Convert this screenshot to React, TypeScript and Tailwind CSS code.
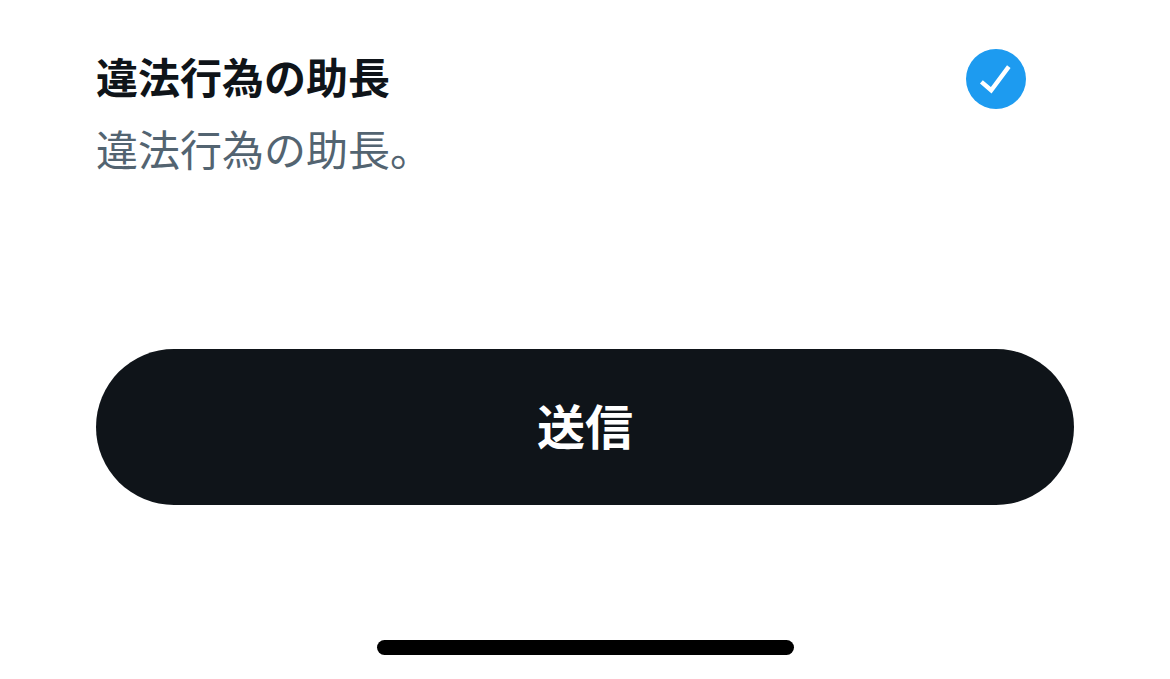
export default function App() {
  return (
    <main className="flex min-h-screen flex-col bg-white font-['Noto_Sans_CJK_JP',sans-serif]">
      <form className="flex flex-col px-24 pt-10" onSubmit={(e) => e.preventDefault()}>
        <label htmlFor="illegal" className="flex items-start justify-between pr-12">
          <span className="flex flex-col text-[42px] leading-[72px]">
            <span className="font-bold text-[#0f1419]">違法行為の助長</span>
            <span id="illegal-note" className="text-[#536471]">違法行為の助長。</span>
          </span>
          <span className="mt-[9px] grid size-[60px] shrink-0">
            <input
              id="illegal"
              type="checkbox"
              defaultChecked
              aria-describedby="illegal-note"
              className="peer col-start-1 row-start-1 size-[60px] appearance-none rounded-full border-2 border-[#cfd9de] checked:border-0 checked:bg-[#1d9bf0]"
            />
            <svg
              viewBox="0 0 60 60"
              aria-hidden="true"
              className="pointer-events-none col-start-1 row-start-1 hidden size-[60px] peer-checked:block"
            >
              <path d="M15.4 32.8 L25.2 41.2 L42.8 17.6" fill="none" stroke="#fff" strokeWidth="4.4" />
            </svg>
          </span>
        </label>
        <button
          type="submit"
          className="mt-[165px] h-[156px] w-full rounded-full bg-[#0f1419] pb-1.5 text-[48px] leading-[72px] font-bold text-white"
        >
          送信
        </button>
      </form>
      <div className="mx-auto mt-auto mb-6 h-[15px] w-[417px] rounded-full bg-black" />
    </main>
  );
}
